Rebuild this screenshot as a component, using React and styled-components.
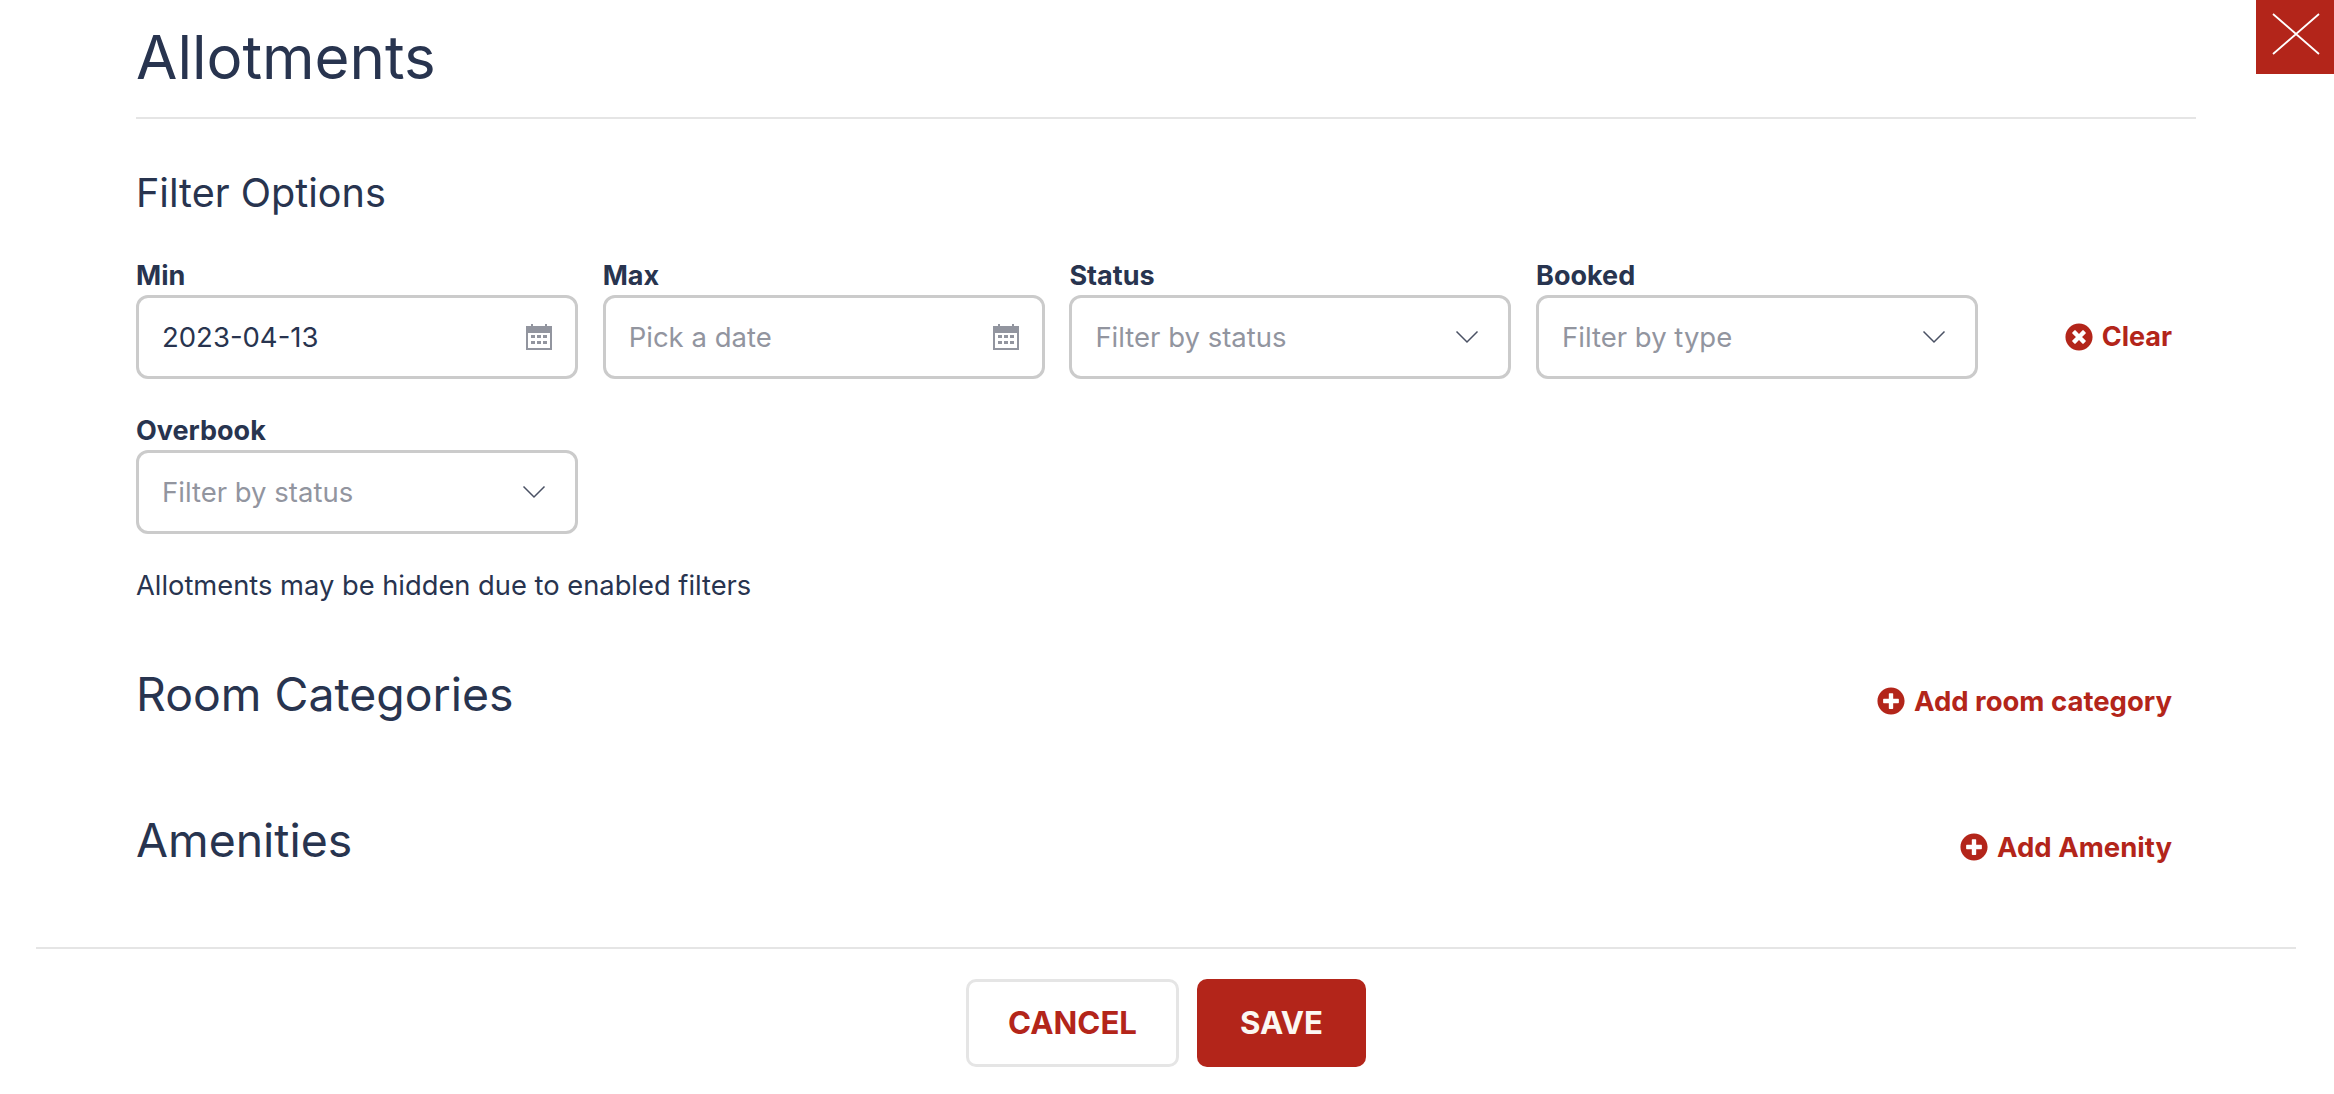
import styled, { createGlobalStyle } from "styled-components";
import { FaPlusCircle, FaTimesCircle } from "react-icons/fa";

const RED = "#b3251a";
const NAVY = "#28344f";

const GlobalStyle = createGlobalStyle`
  html, body { margin: 0; padding: 0; background: #fff; }
  body { font-family: "Inter", "Noto Sans", sans-serif; color: ${NAVY}; }
  * { box-sizing: border-box; }
`;

const Page = styled.div`
  position: relative;
  width: 100%;
  height: 1094px;
  overflow: hidden;
  display: flex;
  flex-direction: column;
`;

const CloseButton = styled.button`
  position: absolute;
  top: 0;
  right: 0;
  width: 78px;
  height: 74px;
  padding: 0 0 6px 2px;
  border: 0;
  background: ${RED};
  display: flex;
  align-items: center;
  justify-content: center;
`;

const Main = styled.main`
  flex: 1;
  padding: 0 138px 0 136px;
`;

const Title = styled.h1`
  margin: 0;
  height: 119px;
  border-bottom: 2px solid #e5e5e5;
  font-size: 60px;
  line-height: 114px;
  font-weight: 400;
`;

const FilterTitle = styled.h3`
  margin: 50px 0 0;
  font-size: 39.6px;
  line-height: 48px;
  font-weight: 400;
`;

const FilterGrid = styled.div`
  margin-top: 44px;
  display: grid;
  grid-template-columns: repeat(4, 442px) 1fr;
  column-gap: 24.7px;
  row-gap: 37px;
`;

const Field = styled.div`
  display: flex;
  flex-direction: column;
  gap: 4px;
`;

const Label = styled.label`
  font-size: 27px;
  line-height: 30px;
  font-weight: 700;
`;

const Control = styled.div`
  height: 84px;
  padding: 0 22px 0 23px;
  border: 3px solid #cbcbcb;
  border-radius: 12px;
  display: flex;
  align-items: center;
  justify-content: space-between;
  font-size: 27.5px;
  color: ${(props) => (props.$filled ? NAVY : "#92959f")};
`;

const ClearCell = styled.div`
  display: flex;
  align-items: flex-end;
  justify-content: flex-end;
  padding: 0 24px 25px 0;
`;

const TextAction = styled.a`
  display: flex;
  align-items: center;
  gap: 9px;
  color: ${RED};
  font-size: ${(props) => props.$size || 27}px;
  line-height: 34px;
  font-weight: 700;
`;

const AddAction = styled(TextAction)`
  margin-top: 14px;
`;

const Hint = styled.p`
  margin: 34px 0 0;
  font-size: 27.3px;
  line-height: 36px;
`;

const SectionRow = styled.section`
  margin-top: ${(props) => props.$top}px;
  padding-right: 24px;
  display: flex;
  align-items: center;
  justify-content: space-between;
`;

const SectionTitle = styled.h2`
  margin: 0;
  font-size: 46.4px;
  line-height: 60px;
  font-weight: 400;
`;

const Footer = styled.footer`
  margin: 0 38px 0 36px;
  height: 147px;
  border-top: 2px solid #e5e5e5;
  display: flex;
  justify-content: center;
  gap: 18px;
  padding-top: 30px;
`;

const FooterButton = styled.button`
  height: 88px;
  width: ${(props) => props.$width}px;
  border-radius: 10px;
  border: ${(props) => (props.$primary ? "0" : "3px solid #e5e5e5")};
  background: ${(props) => (props.$primary ? RED : "#fff")};
  color: ${(props) => (props.$primary ? "#fbf8f3" : RED)};
  font-family: inherit;
  font-size: 31.2px;
  font-weight: 700;
`;

function CalendarIcon() {
  return (
    <svg width="28" height="28" viewBox="0 0 28 28" fill="#92959f">
      <path fillRule="evenodd" d="M1 3h5V1h2v2h12V1h2v2h5v24H1zM3 10v15h22V10z" />
      <path d="M6 12h4v3H6zM12 12h4v3h-4zM18 12h4v3h-4zM6 18h4v3H6zM12 18h4v3h-4zM18 18h4v3h-4z" />
    </svg>
  );
}

const ChevronSvg = styled.svg`
  margin-right: 7px;
`;

function ChevronIcon() {
  return (
    <ChevronSvg width="24" height="14" viewBox="0 0 24 14" fill="none" stroke="#4a5164" strokeWidth="1.5">
      <path d="M1.5 1.5L12 12 22.5 1.5" />
    </ChevronSvg>
  );
}

function FilterField({ label, value, placeholder, icon }) {
  return (
    <Field>
      <Label>{label}</Label>
      <Control $filled={!!value}>
        <span>{value || placeholder}</span>
        {icon === "date" ? <CalendarIcon /> : <ChevronIcon />}
      </Control>
    </Field>
  );
}

export default function App() {
  return (
    <Page>
      <GlobalStyle />
      <CloseButton aria-label="Close">
        <svg width="48" height="44" viewBox="0 0 48 44" stroke="#fff" strokeWidth="1.8">
          <path d="M1 2l46 40M47 2L1 42" />
        </svg>
      </CloseButton>
      <Main>
        <Title>Allotments</Title>
        <FilterTitle>Filter Options</FilterTitle>
        <FilterGrid>
          <FilterField label="Min" value="2023-04-13" icon="date" />
          <FilterField label="Max" placeholder="Pick a date" icon="date" />
          <FilterField label="Status" placeholder="Filter by status" />
          <FilterField label="Booked" placeholder="Filter by type" />
          <ClearCell>
            <TextAction>
              <FaTimesCircle size={28} />
              Clear
            </TextAction>
          </ClearCell>
          <FilterField label="Overbook" placeholder="Filter by status" />
        </FilterGrid>
        <Hint>Allotments may be hidden due to enabled filters</Hint>
        <SectionRow $top={60}>
          <SectionTitle>Room Categories</SectionTitle>
          <AddAction $size={27.5}>
            <FaPlusCircle size={28} />
            Add room category
          </AddAction>
        </SectionRow>
        <SectionRow $top={86}>
          <SectionTitle>Amenities</SectionTitle>
          <AddAction $size={27.5}>
            <FaPlusCircle size={28} />
            Add Amenity
          </AddAction>
        </SectionRow>
      </Main>
      <Footer>
        <FooterButton $width={213}>CANCEL</FooterButton>
        <FooterButton $width={169} $primary>SAVE</FooterButton>
      </Footer>
    </Page>
  );
}
